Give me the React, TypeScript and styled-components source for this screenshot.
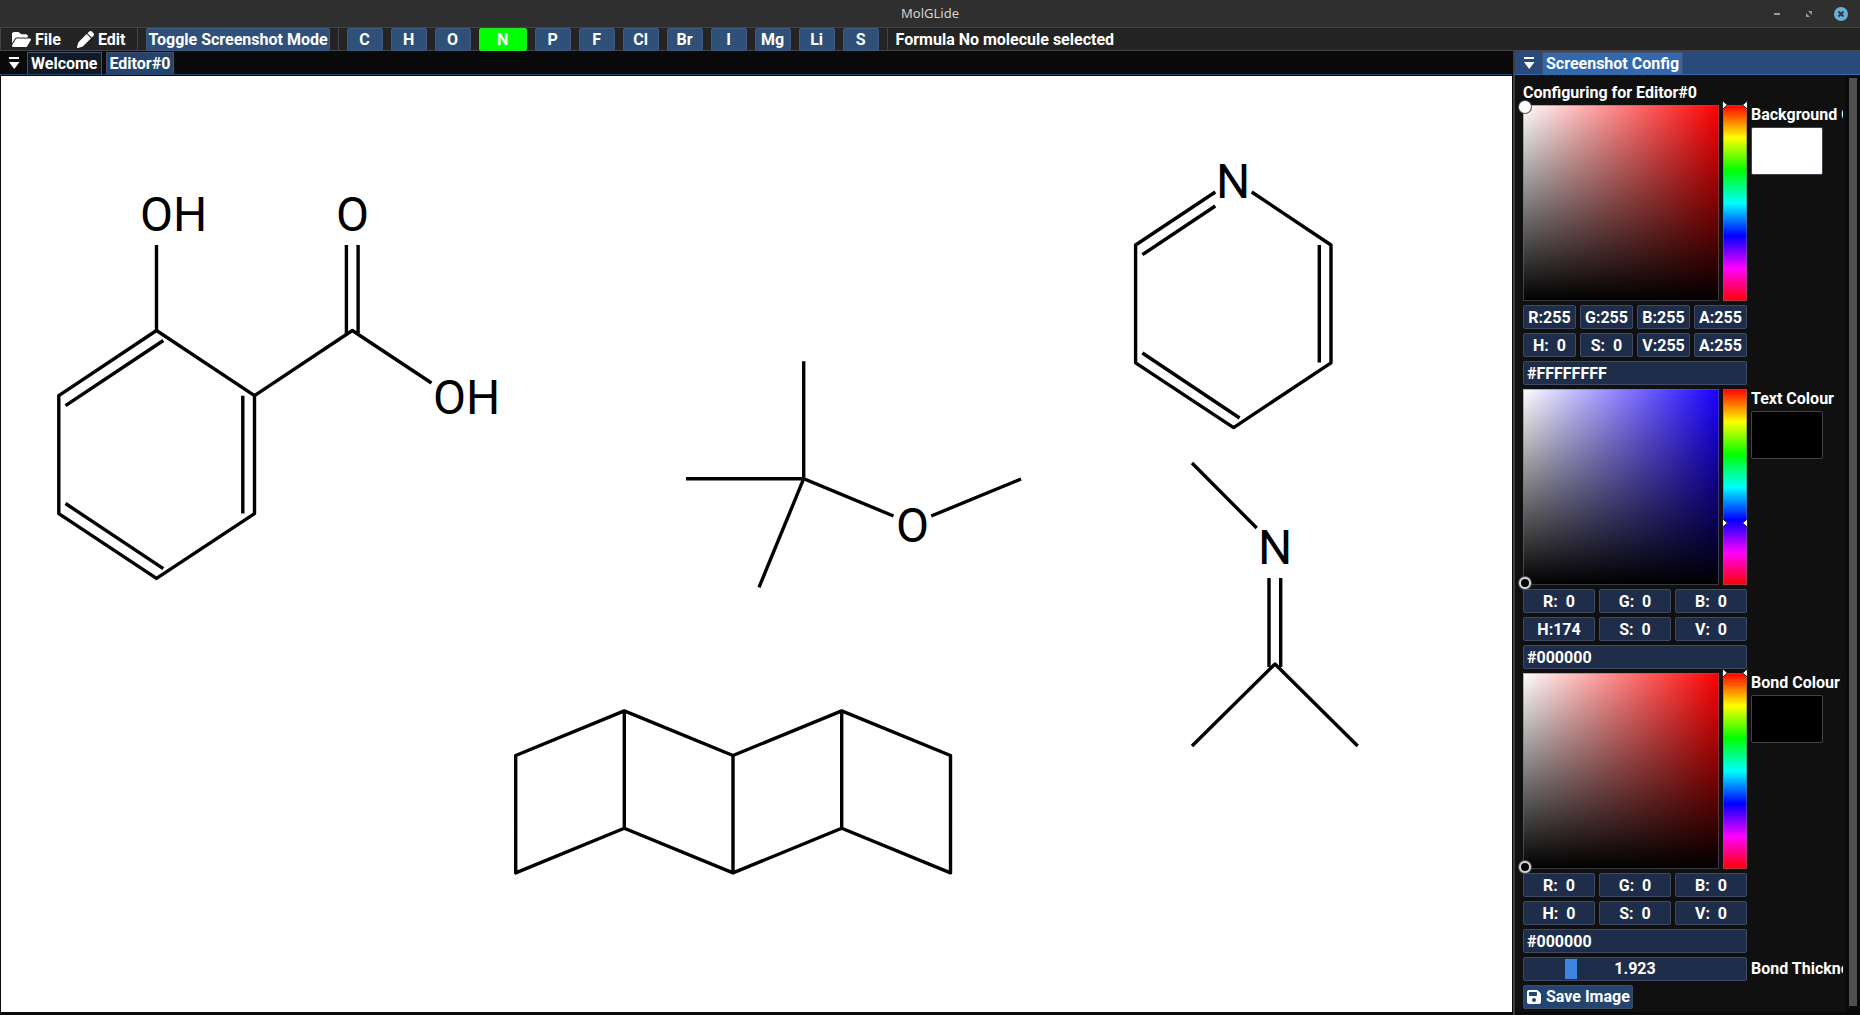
import React, { useState } from "react";
import styled, { createGlobalStyle } from "styled-components";
import { FaFloppyDisk, FaFolderOpen, FaPen } from "react-icons/fa6";

const GlobalStyle = createGlobalStyle`
  * { box-sizing: border-box; }
  body { margin: 0; background: #0a0a0a; }
  button, input, output { font: inherit; color: inherit; }
`;

const line = "#43434c";
const fieldBorder = "#3e4a66";

const Window = styled.div`
  display: flex;
  flex-direction: column;
  height: 100vh;
  overflow: hidden;
  background: #0a0a0a;
  color: #fff;
  font: 700 16px/20px Roboto, sans-serif;
`;

const TitleBar = styled.header`
  display: grid;
  grid-template-columns: 1fr auto 1fr;
  align-items: center;
  flex: none;
  height: 27px;
  padding: 0 12px;
  background: #2f2f2f;
`;

const Title = styled.h1`
  grid-column: 2;
  margin: 0;
  padding-bottom: 1px;
  color: #d6d1cb;
  font: 400 13px/18px "Noto Sans", sans-serif;
`;

const WindowControls = styled.div`
  display: flex;
  justify-content: flex-end;
  gap: 18px;
`;

const WindowButton = styled.button`
  display: flex;
  padding: 0;
  border: 0;
  background: none;
`;

const MenuBar = styled.nav`
  display: flex;
  flex: none;
  gap: 8px;
  height: 24px;
  padding-left: 7px;
  border-top: 1px solid ${line};
  border-left: 1px solid ${line};
  background: #242424;
  box-shadow: inset 0 -1px ${line};
`;

const MenuButton = styled.button`
  display: flex;
  align-items: center;
  gap: 4px;
  padding: 0 4px;
  border: 0;
  background: none;
  white-space: nowrap;

  svg { flex: none; }
`;

const Separator = styled.span`
  flex: none;
  width: 1px;
  background: ${line};
`;

const ToolButton = styled.button<{ $selected?: boolean }>`
  flex: none;
  min-width: ${(p) => (p.$selected ? 48 : 36)}px;
  padding: 0 1px;
  border: 1px solid ${(p) => (p.$selected ? "#1fe61f" : "#405a83")};
  border-radius: 2px;
  background: ${(p) => (p.$selected ? "#00ff00" : "#2f5079")};
  line-height: 20px;
  white-space: nowrap;
`;

const Formula = styled.span`
  align-self: center;
  white-space: nowrap;
`;

const Workspace = styled.div`
  display: flex;
  flex: 1;
  min-height: 0;
`;

const EditorPane = styled.main`
  display: flex;
  flex: 1;
  flex-direction: column;
  min-width: 0;
`;

const Splitter = styled.div`
  flex: none;
  width: 2px;
  margin-left: 1px;
  background: #3d3d43;
`;

const TabBar = styled.div<{ $focused?: boolean }>`
  display: flex;
  flex: none;
  gap: 4px;
  height: 24px;
  padding: 1px 8px 0;
  border-bottom: 1px solid ${(p) => (p.$focused ? "#3268ad" : "#24436d")};
  background: ${(p) => (p.$focused ? "#294a7a" : "#0a0a0a")};
`;

const TabListButton = styled.button`
  display: flex;
  align-items: center;
  width: 15px;
  padding: 0 0 0 1px;
  border: 0;
  background: none;
`;

const Tab = styled.button<{ $tone: string }>`
  padding: 0 3px;
  border: 1px solid #46506a;
  border-bottom: 0;
  background: ${(p) => p.$tone};
  white-space: nowrap;
`;

const Canvas = styled.div`
  flex: 1;
  min-height: 0;
  margin: 1px 0 3px 1px;
  overflow: hidden;
  background: #fff;
`;

const Drawing = styled.svg`
  display: block;
  width: 100%;
  height: 100%;
  stroke: #000;
  stroke-width: 3.4px;
  fill: none;

  text {
    font: 400 48px Roboto, sans-serif;
    fill: #000;
    stroke: none;
  }
`;

const ConfigPane = styled.aside`
  display: flex;
  flex: none;
  flex-direction: column;
  width: 345px;
  margin-bottom: 2px;
  background: #101010;
  border-bottom: 1px solid #060606;
`;

const ConfigScroll = styled.div`
  display: flex;
  flex: 1;
  min-height: 0;
`;

const ConfigContent = styled.form`
  display: flex;
  flex: 1;
  flex-direction: column;
  gap: 4px;
  min-width: 0;
  margin-right: 3px;
  padding: 10px 0 0 8px;
  overflow: hidden;
`;

const Heading = styled.h2`
  margin: 0;
  font-size: 16px;
  line-height: 16px;
`;

const ScrollTrack = styled.div`
  flex: none;
  width: 14px;
  padding: 3px 3px 6px;
  background: #0a0a0a;
`;

const ScrollThumb = styled.div`
  height: 100%;
  background: #4f4f4f;
`;

const PickerGroup = styled.fieldset`
  display: grid;
  grid-template-columns: 224px 1fr;
  column-gap: 4px;
  margin: 0;
  padding: 0;
  border: 0;
  min-width: 0;
`;

const PickerControls = styled.div`
  display: flex;
  flex-direction: column;
  gap: 4px;
`;

const PickerSurface = styled.div`
  display: grid;
  grid-template-columns: 196px 24px;
  gap: 4px;
  height: 196px;
`;

const ShadeSquare = styled.div<{ $hue: string }>`
  position: relative;
  border: 1px solid rgba(110, 110, 128, 0.5);
  background:
    linear-gradient(to bottom, transparent, #000) border-box,
    linear-gradient(to right, #fff, ${(p) => p.$hue}) border-box;
`;

const ShadeMarker = styled.span<{ $fill: string; $bottom?: boolean }>`
  position: absolute;
  left: -5px;
  ${(p) => (p.$bottom ? "bottom" : "top")}: -5px;
  width: 12px;
  height: 12px;
  border: 2px solid ${(p) => (p.$bottom ? "#d8d8d8" : "#fff")};
  border-radius: 50%;
  background: ${(p) => p.$fill};
  box-shadow: 0 0 0 1px #555;
`;

const HueBar = styled.div`
  position: relative;
  display: flex;
`;

const HueRange = styled.input`
  appearance: none;
  width: 24px;
  height: 196px;
  margin: 0;
  border: 1px solid rgba(110, 110, 128, 0.5);
  background: linear-gradient(#f00, #ff0, #0f0, #0ff, #00f, #f0f, #f00) border-box;
  writing-mode: vertical-lr;

  &::-webkit-slider-thumb {
    appearance: none;
    width: 24px;
    height: 8px;
    background: transparent;
  }
`;

const HueArrows = styled.svg`
  position: absolute;
  left: -2px;
  width: 28px;
  height: 10px;
  margin-top: -5px;
  fill: #fff;
  stroke: #222;
  pointer-events: none;
`;

const FieldRow = styled.div`
  display: flex;
  gap: 4px;
`;

const Field = styled.input<{ $align?: string }>`
  flex: 1;
  width: 0;
  min-width: 0;
  height: 24px;
  padding: 0 3px;
  border: 1px solid ${fieldBorder};
  border-radius: 2px;
  background: #1e2e4a;
  text-align: ${(p) => p.$align || "center"};
`;

const Preview = styled.div`
  display: flex;
  flex-direction: column;
  gap: 2px;
  min-width: 0;
  overflow: hidden;
`;

const PreviewLabel = styled.span`
  white-space: nowrap;
`;

const Swatch = styled.button<{ $color: string }>`
  width: 72px;
  height: 48px;
  padding: 0;
  border: 1px solid ${line};
  border-radius: 2px;
  background: ${(p) => p.$color};
`;

const SliderRow = styled.div`
  display: grid;
  grid-template-columns: 224px 1fr;
  column-gap: 4px;
  align-items: center;

  label { overflow: hidden; white-space: nowrap; }
`;

const SliderBox = styled.div`
  display: grid;
  height: 24px;
  padding: 1px;
  border: 1px solid ${fieldBorder};
  border-radius: 2px;
  background: #1e2e4a;

  > * { grid-area: 1 / 1; }
  output { text-align: center; pointer-events: none; }
`;

const Slider = styled.input`
  appearance: none;
  width: 100%;
  height: 20px;
  margin: 0;
  background: none;

  &::-webkit-slider-thumb {
    appearance: none;
    width: 12px;
    height: 20px;
    background: #3d85e0;
  }
`;

const SaveButton = styled.button`
  display: flex;
  align-items: center;
  align-self: flex-start;
  gap: 4px;
  height: 24px;
  padding: 0 2px;
  border: 1px solid ${fieldBorder};
  border-radius: 2px;
  background: #24456f;
  white-space: nowrap;
`;

const elements = ["C", "H", "O", "N", "P", "F", "Cl", "Br", "I", "Mg", "Li", "S"];

type PickerProps = {
  label: string;
  hue: string;
  huePosition: number;
  color: string;
  light?: boolean;
  rgb: string[];
  hsv: string[];
  hex: string;
};

const pickers: PickerProps[] = [
  {
    label: "Background Colour", hue: "#ff0000", huePosition: 0, color: "#ffffff", light: true,
    rgb: ["R:255", "G:255", "B:255", "A:255"], hsv: ["H:  0", "S:  0", "V:255", "A:255"], hex: "#FFFFFFFF",
  },
  {
    label: "Text Colour", hue: "#1800ff", huePosition: 174, color: "#000000",
    rgb: ["R:  0", "G:  0", "B:  0"], hsv: ["H:174", "S:  0", "V:  0"], hex: "#000000",
  },
  {
    label: "Bond Colour", hue: "#ff0000", huePosition: 0, color: "#000000",
    rgb: ["R:  0", "G:  0", "B:  0"], hsv: ["H:  0", "S:  0", "V:  0"], hex: "#000000",
  },
];

function ColourPicker(p: PickerProps) {
  const [hue, setHue] = useState(p.huePosition);
  return (
    <PickerGroup aria-label={p.label}>
      <PickerControls>
        <PickerSurface>
          <ShadeSquare $hue={p.hue}>
            <ShadeMarker $fill={p.color} $bottom={!p.light} />
          </ShadeSquare>
          <HueBar>
            <HueRange
              type="range" min={0} max={255} value={hue} aria-label={`${p.label} hue`}
              onChange={(e) => setHue(Number(e.target.value))}
            />
            <HueArrows viewBox="0 0 28 10" style={{ top: `${(hue / 255) * 100}%` }}>
              <path d="M1.5 .8v8.4L6.5 5zM26.500 .8v8.4L21.500 5z" />
            </HueArrows>
          </HueBar>
        </PickerSurface>
        {[p.rgb, p.hsv].map((row, i) => (
          <FieldRow key={i}>
            {row.map((v) => (
              <Field key={v[0]} defaultValue={v} aria-label={`${p.label} ${v[0]}`} />
            ))}
          </FieldRow>
        ))}
        <FieldRow>
          <Field $align="left" defaultValue={p.hex} aria-label={`${p.label} hex`} />
        </FieldRow>
      </PickerControls>
      <Preview>
        <PreviewLabel>{p.label}</PreviewLabel>
        <Swatch type="button" $color={p.color} aria-label={`${p.label} preview`} />
      </Preview>
    </PickerGroup>
  );
}

function TabListIcon() {
  return (
    <svg width="11" height="13" viewBox="0 0 11 13" fill="#fff">
      <path d="M0 0h10v2H0zM0 5h10.500L5.250 12z" />
    </svg>
  );
}

function Molecules() {
  return (
    <Drawing role="img" aria-label="Molecule drawing">
      <g transform="translate(-1 -76)">
        {/* Salicylic acid */}
        <path d="M156.500 330.500L254.500 395.600V513.600L156.500 578.400L58.800 513.600V395.600Z" strokeLinejoin="round" />
        <path d="M163.300 340.500L65.500 405.600M242.800 395.700V513.400M65.500 503.500L163.300 568.600" />
        <path d="M156.500 245V330.500M254.500 395.600L352.300 330.500L431.500 383M346.400 245V333.500M358.100 245V333.500" strokeLinejoin="round" />
        <text x="140" y="231">OH</text>
        <text x="336" y="231">O</text>
        <text x="433" y="414">OH</text>

        {/* Methyl tert-butyl ether */}
        <path d="M803.700 361.300V478.700M686 478.700H803.700M759 587.300L803.700 478.700L893.500 516M931.200 516L1021 479" />
        <text x="896" y="542">O</text>

        {/* Pyridine */}
        <path d="M1215.300 192L1135.600 245V362.800L1233.600 427.600L1331 362.800V245L1251.700 192" strokeLinejoin="round" />
        <path d="M1142.400 254.700L1215.300 206M1319.300 245V362.500M1142.400 353L1239.600 418" />
        <text x="1233" y="198" textAnchor="middle">N</text>

        {/* Imine */}
        <path d="M1192 463L1256.700 528M1269 578V667M1280.700 578V667M1192 746L1275 664L1357.700 746" strokeLinejoin="round" />
        <text x="1275" y="564" textAnchor="middle">N</text>

        {/* Fused cyclobutanes */}
        <path
          d="M515.700 755.500L624.300 710.900L733 755.500L841.700 710.900L950.500 755.500V872.900L841.700 828.300L733 872.900L624.300 828.300L515.700 872.900ZM624.300 710.900V828.300M733 755.500V872.900M841.700 710.900V828.300"
          strokeLinejoin="round"
        />
      </g>
    </Drawing>
  );
}

export default function App() {
  const [element, setElement] = useState("N");
  const [thickness, setThickness] = useState(1.923);

  return (
    <Window>
      <GlobalStyle />
      <TitleBar>
        <Title>MolGLide</Title>
        <WindowControls>
          <WindowButton aria-label="Minimise">
            <svg width="14" height="14" fill="#9a9a9a"><path d="M4 6h6v2H4z" /></svg>
          </WindowButton>
          <WindowButton aria-label="Restore">
            <svg width="14" height="14" fill="#9a9a9a"><path d="M6 4h4v4zM4 6l4 4H4z" /></svg>
          </WindowButton>
          <WindowButton aria-label="Close">
            <svg width="14" height="14">
              <circle cx="7" cy="7" r="7" fill="#6aafd6" />
              <path d="M4.500 4.500l5 5M9.500 4.500l-5 5" stroke="#2b3c47" strokeWidth="2" />
            </svg>
          </WindowButton>
        </WindowControls>
      </TitleBar>

      <MenuBar>
        <MenuButton><FaFolderOpen size={19} />File</MenuButton>
        <MenuButton><FaPen size={17} />Edit</MenuButton>
        <Separator />
        <ToolButton>Toggle Screenshot Mode</ToolButton>
        <Separator />
        {elements.map((e) => (
          <ToolButton key={e} $selected={e === element} onClick={() => setElement(e)}>{e}</ToolButton>
        ))}
        <Separator />
        <Formula>Formula No molecule selected</Formula>
      </MenuBar>

      <Workspace>
        <EditorPane>
          <TabBar>
            <TabListButton aria-label="Tab list"><TabListIcon /></TabListButton>
            <Tab $tone="#111a27">Welcome</Tab>
            <Tab $tone="#24436d">Editor#0</Tab>
          </TabBar>
          <Canvas><Molecules /></Canvas>
        </EditorPane>
        <Splitter />
        <ConfigPane>
          <TabBar $focused>
            <TabListButton aria-label="Tab list"><TabListIcon /></TabListButton>
            <Tab $tone="#3268ad">Screenshot Config</Tab>
          </TabBar>
          <ConfigScroll>
            <ConfigContent onSubmit={(e) => e.preventDefault()}>
              <Heading>Configuring for Editor#0</Heading>
              {pickers.map((p) => <ColourPicker key={p.label} {...p} />)}
              <SliderRow>
                <SliderBox>
                  <Slider
                    id="thickness" type="range" min={0} max={10} step={0.001} value={thickness}
                    onChange={(e) => setThickness(Number(e.target.value))}
                  />
                  <output htmlFor="thickness">{thickness.toFixed(3)}</output>
                </SliderBox>
                <label htmlFor="thickness">Bond Thickness</label>
              </SliderRow>
              <SaveButton><FaFloppyDisk size={16} />Save Image</SaveButton>
            </ConfigContent>
            <ScrollTrack><ScrollThumb /></ScrollTrack>
          </ConfigScroll>
        </ConfigPane>
      </Workspace>
    </Window>
  );
}
